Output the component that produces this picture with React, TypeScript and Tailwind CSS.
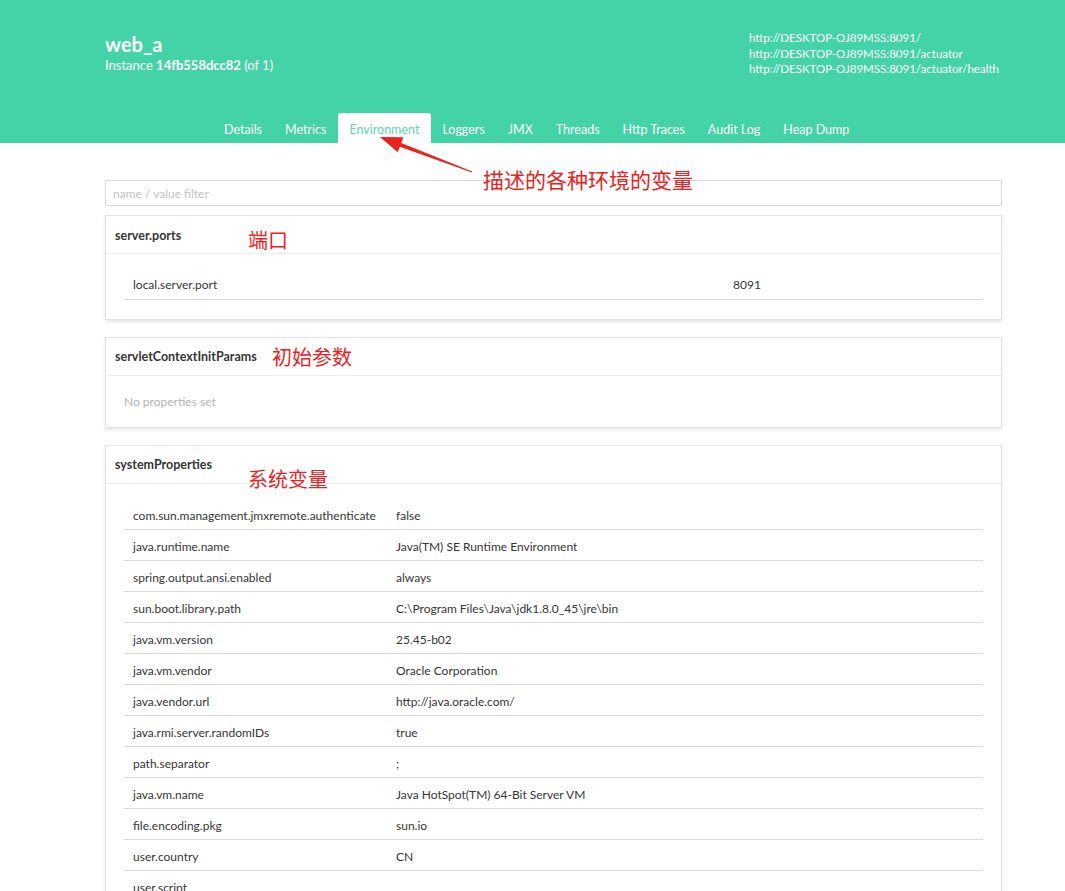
import React from "react";

type Prop = { name: string; value: string };

const urls = [
  "http://DESKTOP-OJ89MSS:8091/",
  "http://DESKTOP-OJ89MSS:8091/actuator",
  "http://DESKTOP-OJ89MSS:8091/actuator/health",
];

const tabs = [
  "Details",
  "Metrics",
  "Environment",
  "Loggers",
  "JMX",
  "Threads",
  "Http Traces",
  "Audit Log",
  "Heap Dump",
];

const systemProps: Prop[] = [
  { name: "com.sun.management.jmxremote.authenticate", value: "false" },
  { name: "java.runtime.name", value: "Java(TM) SE Runtime Environment" },
  { name: "spring.output.ansi.enabled", value: "always" },
  { name: "sun.boot.library.path", value: "C:\\Program Files\\Java\\jdk1.8.0_45\\jre\\bin" },
  { name: "java.vm.version", value: "25.45-b02" },
  { name: "java.vm.vendor", value: "Oracle Corporation" },
  { name: "java.vendor.url", value: "http://java.oracle.com/" },
  { name: "java.rmi.server.randomIDs", value: "true" },
  { name: "path.separator", value: ";" },
  { name: "java.vm.name", value: "Java HotSpot(TM) 64-Bit Server VM" },
  { name: "file.encoding.pkg", value: "sun.io" },
  { name: "user.country", value: "CN" },
  { name: "user.script", value: "" },
  { name: "sun.java.launcher", value: "SUN_STANDARD" },
  { name: "sun.os.patch.level", value: "" },
];

function PropTable({ rows, keyWidth }: { rows: Prop[]; keyWidth: string }) {
  return (
    <table className="w-full border-collapse text-[12px] text-[#363636]">
      <tbody>
        {rows.map((r) => (
          <tr key={r.name} className="border-b border-[#dbdbdb]">
            <td className={`h-[31px] px-[9px] pt-[4px] align-middle ${keyWidth}`}>{r.name}</td>
            <td className="h-[31px] px-[9px] pt-[4px] align-middle">{r.value}</td>
          </tr>
        ))}
      </tbody>
    </table>
  );
}

function Card({
  title,
  note,
  children,
}: {
  title: string;
  note: React.ReactNode;
  children: React.ReactNode;
}) {
  return (
    <section className="relative border border-[#e4e4e4] bg-white shadow-[0_2px_3px_rgba(10,10,10,0.1)]">
      <header className="flex h-[38px] items-center border-b border-[#ededed] px-[9px] pt-[3px]">
        <h3 className="text-[12.5px] font-bold text-[#363636]">{title}</h3>
      </header>
      {note}
      <div className="px-[18px] pt-[14px] pb-[19px]">{children}</div>
    </section>
  );
}

const noteCls =
  "pointer-events-none absolute leading-none text-[#e8231f] font-['Noto_Sans_CJK_SC',sans-serif]";

export default function App() {
  return (
    <div className="relative min-h-screen bg-white font-['Lato','Noto_Sans_CJK_SC',sans-serif]">
      {/* header */}
      <div className="h-[143px] bg-[#44d3a6] text-white">
        <div className="ml-[105px] flex h-[113px] w-[897px] justify-between pt-[31px]">
          <div>
            <h1 className="text-[20px] font-bold leading-[26px]">web_a</h1>
            <p className="text-[13px] leading-[16px]">
              Instance <b>14fb558dcc82</b> (of 1)
            </p>
          </div>
          <div className="-mt-[1px] w-[253px] whitespace-nowrap text-[11.5px] leading-[15.5px]">
            {urls.map((u) => (
              <div key={u}>{u}</div>
            ))}
          </div>
        </div>
        <nav className="ml-[212.5px] flex h-[30px]">
          {tabs.map((t) => (
            <a
              key={t}
              className={
                t === "Environment"
                  ? "flex items-center rounded-t-[3px] bg-white px-[11.5px] pt-[5px] text-[12.5px] text-[#5fd6b0]"
                  : "flex items-center px-[11.5px] pt-[5px] text-[12.5px] text-white"
              }
            >
              {t}
            </a>
          ))}
        </nav>
      </div>

      {/* content */}
      <main className="ml-[105px] flex w-[897px] flex-col gap-[17px] pt-[37px] pb-10">
        <input
          placeholder="name / value filter"
          className="-mb-[8px] h-[26px] w-full border border-[#dbdbdb] px-[7px] text-[12px] outline-none placeholder:text-[#c4c4c4]"
        />

        <Card
          title="server.ports"
          note={<span className={`${noteCls} left-[142px] top-[14px] text-[20px]`}>端口</span>}
        >
          <PropTable rows={[{ name: "local.server.port", value: "8091" }]} keyWidth="w-[600px]" />
        </Card>

        <Card
          title="servletContextInitParams"
          note={<span className={`${noteCls} left-[166px] top-[9px] text-[20px]`}>初始参数</span>}
        >
          <p className="mt-[3px] -mb-[3px] text-[12px] leading-[18px] text-[#b5b5b5]">
            No properties set
          </p>
        </Card>

        <Card
          title="systemProperties"
          note={<span className={`${noteCls} left-[142px] top-[23px] text-[20px]`}>系统变量</span>}
        >
          <div className="pt-[1px]">
            <PropTable rows={systemProps} keyWidth="w-[263px]" />
          </div>
        </Card>
      </main>

      {/* annotation: arrow + caption */}
      <svg
        className="pointer-events-none absolute left-[370px] top-[128px]"
        width="110"
        height="52"
        viewBox="370 128 110 52"
      >
        <polygon
          points="380,137 403.4,137.3 401.3,142.9 472.2,171.5 471.8,172.5 399.9,146.7 397.8,152.3"
          fill="#e8231f"
        />
      </svg>
      <span className={`${noteCls} left-[483px] top-[169px] text-[21px]`}>描述的各种环境的变量</span>
    </div>
  );
}
